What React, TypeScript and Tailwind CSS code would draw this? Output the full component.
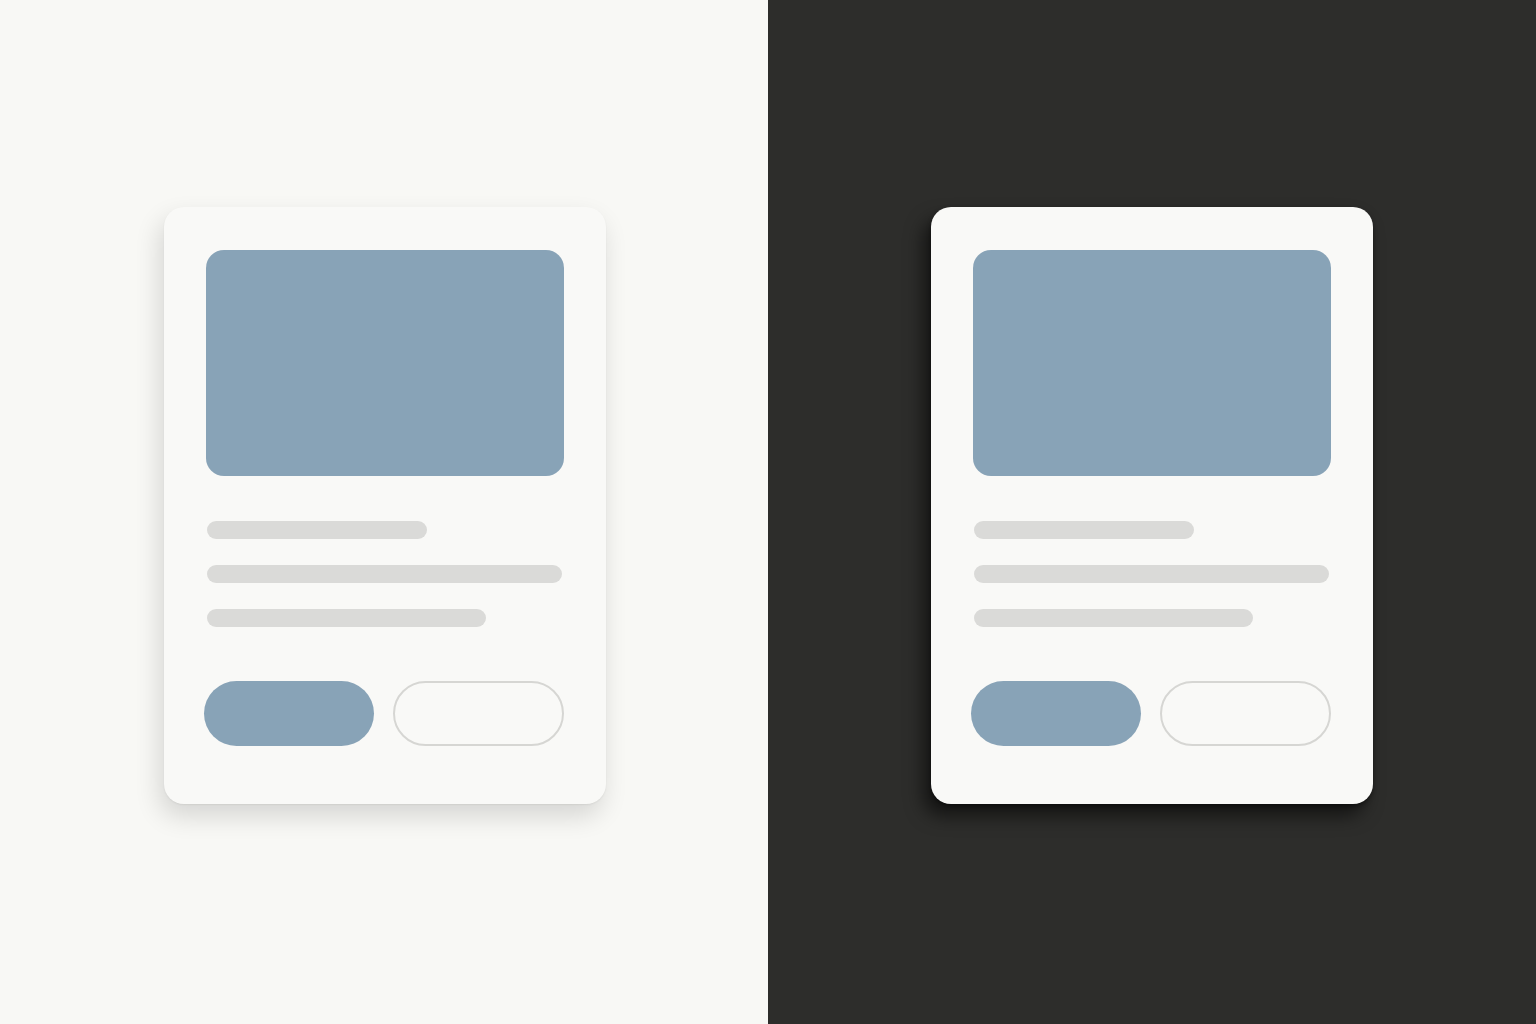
export default function App() {
  return (
    <div className="flex w-[1536px] h-[1024px] overflow-hidden">
      <section className="w-[768px] h-[1024px] bg-[#f8f8f5] flex justify-center pt-[207px] pl-[2px]">
        <Card theme="light" />
      </section>
      <section className="w-[768px] h-[1024px] bg-[#2d2d2b] flex justify-center pt-[207px]">
        <Card theme="dark" />
      </section>
    </div>
  );
}

function Card({ theme }: { theme: "light" | "dark" }) {
  const shadow =
    theme === "light"
      ? "shadow-[-4px_12px_26px_rgba(0,0,0,0.14),0_1px_2px_rgba(0,0,0,0.06)]"
      : "shadow-[-8px_12px_18px_rgba(0,0,0,0.55),0_2px_4px_rgba(0,0,0,0.4)]";
  return (
    <div
      className={`w-[442px] h-[597px] rounded-[20px] bg-[#f9f9f7] pl-[42px] pr-[42px] pt-[43px] flex flex-col ${shadow}`}
    >
      <div className="w-[358px] h-[226px] rounded-[18px] bg-[#88a3b7]" />
      <div className="mt-[45px] flex flex-col gap-[26px] pl-[1px]">
        <div className="w-[220px] h-[18px] rounded-full bg-[#dadad8]" />
        <div className="w-[355px] h-[18px] rounded-full bg-[#dadad8]" />
        <div className="w-[279px] h-[18px] rounded-full bg-[#dadad8]" />
      </div>
      <div className="mt-[54px] -ml-[2px] flex gap-[19px]">
        <div className="w-[170px] h-[65px] rounded-full bg-[#88a3b7]" />
        <div className="w-[172px] h-[65px] rounded-full border-2 border-[#d6d6d3] bg-[#f9f9f7]" />
      </div>
    </div>
  );
}
